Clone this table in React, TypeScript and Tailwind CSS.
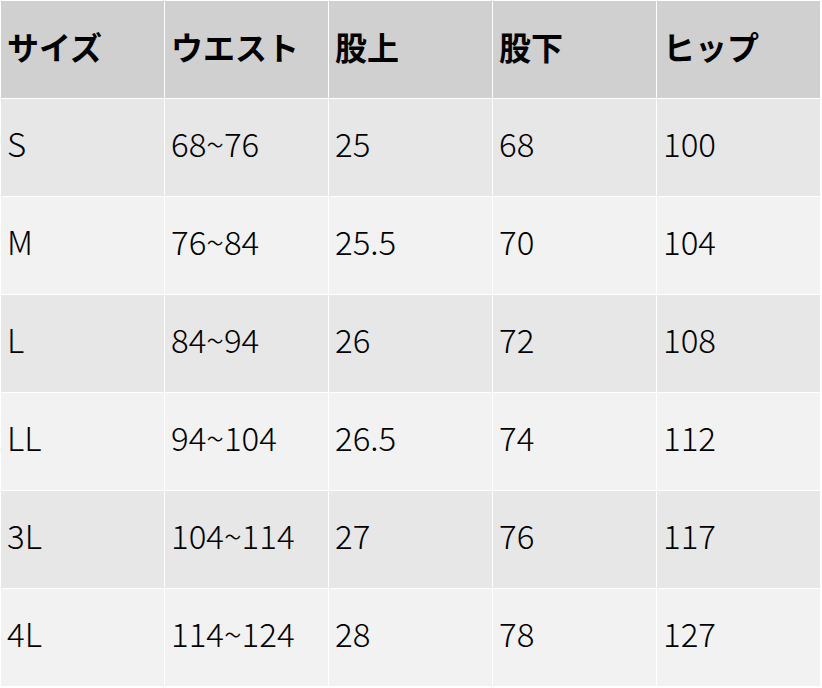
import React from "react";

const header = ["サイズ", "ウエスト", "股上", "股下", "ヒップ"];
const rows = [
  ["S", "68~76", "25", "68", "100"],
  ["M", "76~84", "25.5", "70", "104"],
  ["L", "84~94", "26", "72", "108"],
  ["LL", "94~104", "26.5", "74", "112"],
  ["3L", "104~114", "27", "76", "117"],
  ["4L", "114~124", "28", "78", "127"],
];

export default function App() {
  return (
    <div
      className="w-[822px] h-[688px] bg-white overflow-hidden"
      style={{ fontFamily: '"Noto Sans CJK JP", "Noto Sans", sans-serif' }}
    >
      <table className="border-separate border-spacing-[1px] bg-white table-fixed w-[821px] text-black">
        <thead>
          <tr className="bg-[#d0d0d0]">
            {header.map((h) => (
              <th
                key={h}
                className="h-[97px] w-[163px] p-0 pl-[6px] pb-[8px] text-left align-middle font-bold text-[32px] leading-none"
              >
                {h}
              </th>
            ))}
          </tr>
        </thead>
        <tbody>
          {rows.map((r, i) => (
            <tr key={i} className={i % 2 === 0 ? "bg-[#e7e7e7]" : "bg-[#f2f2f2]"}>
              {r.map((c, j) => (
                <td
                  key={j}
                  className="h-[97px] w-[163px] p-0 pl-[6px] pb-[9px] text-left align-middle font-light text-[33px] leading-none"
                >
                  {c}
                </td>
              ))}
            </tr>
          ))}
        </tbody>
      </table>
    </div>
  );
}
